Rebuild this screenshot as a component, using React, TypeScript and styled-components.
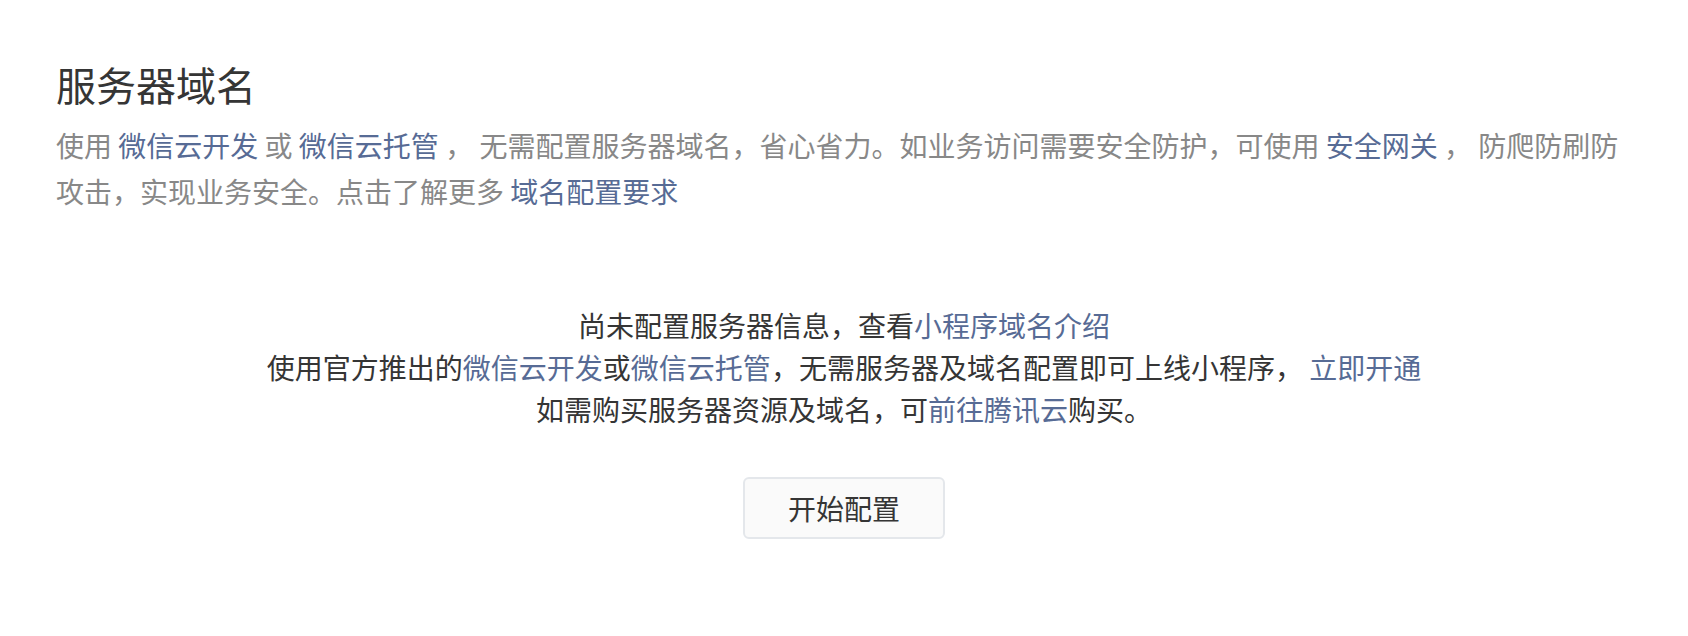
import styled, { createGlobalStyle } from "styled-components";

const GlobalStyle = createGlobalStyle`
  html, body {
    margin: 0;
    padding: 0;
    background: #ffffff;
  }
  body {
    font-family: "Noto Sans CJK SC", "Noto Sans", sans-serif;
    color: #353535;
  }
`;

const Page = styled.div`
  padding: 56px 56px 0;
`;

const Title = styled.h2`
  margin: 0;
  font-size: 40px;
  font-weight: 400;
  line-height: 56px;
  color: #353535;
`;

const Desc = styled.p`
  margin: 10px 0 0;
  font-size: 28px;
  line-height: 46px;
  color: #888888;
`;

const Link = styled.a`
  color: #576b95;
  text-decoration: none;
  cursor: pointer;
`;

const Empty = styled.div`
  margin-top: 90px;
  display: flex;
  flex-direction: column;
  align-items: center;
`;

const EmptyText = styled.div`
  font-size: 28px;
  line-height: 42px;
  color: #353535;
  text-align: center;
`;

const Button = styled.button`
  margin-top: 47px;
  width: 202px;
  height: 62px;
  border: 2px solid #e4e7eb;
  border-radius: 6px;
  background: #fafafa;
  font-family: inherit;
  font-size: 28px;
  color: #353535;
  cursor: pointer;
`;

export default function App() {
  return (
    <>
      <GlobalStyle />
      <Page>
        <Title>服务器域名</Title>
        <Desc>
          使用 <Link>微信云开发</Link> 或 <Link>微信云托管</Link> ， 无需配置服务器域名，省心省力。如业务访问需要安全防护，可使用 <Link>安全网关</Link> ， 防爬防刷防攻击，实现业务安全。点击了解更多 <Link>域名配置要求</Link>
        </Desc>
        <Empty>
          <EmptyText>
            尚未配置服务器信息，查看<Link>小程序域名介绍</Link>
            <br />
            使用官方推出的<Link>微信云开发</Link>或<Link>微信云托管</Link>，无需服务器及域名配置即可上线小程序， <Link>立即开通</Link>
            <br />
            如需购买服务器资源及域名，可<Link>前往腾讯云</Link>购买。
          </EmptyText>
          <Button>开始配置</Button>
        </Empty>
      </Page>
    </>
  );
}
